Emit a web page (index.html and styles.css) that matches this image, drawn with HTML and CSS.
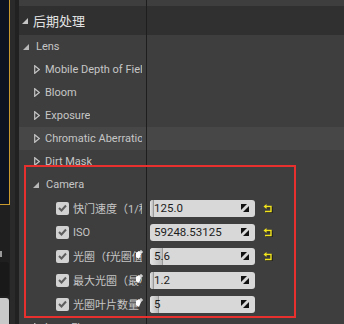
FILE: index.html
```html
<!DOCTYPE html>
<html lang="zh">
<head>
  <meta charset="UTF-8">
  <title>Details</title>
  <link rel="stylesheet" href="styles.css">
</head>
<body>
<div class="screen">

  <!-- left edge of the neighbouring viewport -->
  <div class="side">
    <div class="side-col">
      <div class="viewport"></div>
      <div class="side-gap"></div>
      <div class="side-chip"></div>
      <div class="side-dark"></div>
      <div class="side-light"></div>
    </div>
    <div class="side-strip"></div>
  </div>

  <!-- details panel -->
  <div class="details">
    <div class="row top"><div class="name"></div><div class="value"></div></div>

    <div class="row header">
      <div class="name">
        <svg class="tri" width="6" height="6" viewBox="0 0 6 6"><polygon points="6,0 6,6 0,6" fill="#c4c4c4"/></svg>
        <span class="label">后期处理</span>
      </div>
      <div class="value"></div>
    </div>

    <div class="row cat">
      <div class="name lvl0">
        <svg class="tri" width="6" height="6" viewBox="0 0 6 6"><polygon points="6,0 6,6 0,6" fill="#b8b8b8"/></svg>
        <span class="label">Lens</span>
      </div>
      <div class="value"></div>
    </div>

    <div class="row cat">
      <div class="name lvl1">
        <svg class="tri-open" width="6" height="9" viewBox="0 0 6 9"><polygon points="0.7,0.7 5.3,4.5 0.7,8.3" fill="none" stroke="#c4c4c4" stroke-width="1.2"/></svg>
        <span class="label">Mobile Depth of Field</span>
      </div>
      <div class="value"></div>
    </div>

    <div class="row cat">
      <div class="name lvl1">
        <svg class="tri-open" width="6" height="9" viewBox="0 0 6 9"><polygon points="0.7,0.7 5.3,4.5 0.7,8.3" fill="none" stroke="#c4c4c4" stroke-width="1.2"/></svg>
        <span class="label">Bloom</span>
      </div>
      <div class="value"></div>
    </div>

    <div class="row cat">
      <div class="name lvl1">
        <svg class="tri-open" width="6" height="9" viewBox="0 0 6 9"><polygon points="0.7,0.7 5.3,4.5 0.7,8.3" fill="none" stroke="#c4c4c4" stroke-width="1.2"/></svg>
        <span class="label">Exposure</span>
      </div>
      <div class="value"></div>
    </div>

    <div class="row cat hover">
      <div class="name lvl1">
        <svg class="tri-open" width="6" height="9" viewBox="0 0 6 9"><polygon points="0.7,0.7 5.3,4.5 0.7,8.3" fill="none" stroke="#c4c4c4" stroke-width="1.2"/></svg>
        <span class="label">Chromatic Aberration</span>
      </div>
      <div class="value"></div>
    </div>

    <div class="row cat">
      <div class="name lvl1">
        <svg class="tri-open" width="6" height="9" viewBox="0 0 6 9"><polygon points="0.7,0.7 5.3,4.5 0.7,8.3" fill="none" stroke="#c4c4c4" stroke-width="1.2"/></svg>
        <span class="label">Dirt Mask</span>
      </div>
      <div class="value"></div>
    </div>

    <div class="row cat">
      <div class="name lvl1">
        <svg class="tri" width="6" height="6" viewBox="0 0 6 6"><polygon points="6,0 6,6 0,6" fill="#b8b8b8"/></svg>
        <span class="label">Camera</span>
      </div>
      <div class="value"></div>
    </div>

    <!-- Camera properties -->
    <div class="row prop">
      <div class="name lvl2">
        <span class="check"><svg width="9" height="8" viewBox="0 0 9 8"><polyline points="1,4 3.5,6.5 8,1.5" fill="none" stroke="#5e5e5e" stroke-width="2"/></svg></span>
        <span class="label">快门速度（1/秒）</span>
      </div>
      <div class="value">
        <div class="spin"><span class="fill" style="width: 3px"></span><span class="num">125.0</span><svg class="spin-ico" width="8" height="8" viewBox="0 0 8 8"><polygon points="0,0 6,0 0,6" fill="#111"/><polygon points="8,2 8,8 2,8" fill="#111"/></svg></div>
        <svg class="reset" width="10" height="9" viewBox="0 0 10 9"><path d="M3 2.5 H8 V7.5 H2" fill="none" stroke="#1a1a1a" stroke-width="1.4" transform="translate(1,1)"/><path d="M3 2.5 H8 V7.5 H2" fill="none" stroke="#f2e41c" stroke-width="1.4"/><polygon points="0.5,2.5 3.5,0 3.5,5" fill="#f2e41c"/></svg>
      </div>
    </div>

    <div class="row prop">
      <div class="name lvl2">
        <span class="check"><svg width="9" height="8" viewBox="0 0 9 8"><polyline points="1,4 3.5,6.5 8,1.5" fill="none" stroke="#5e5e5e" stroke-width="2"/></svg></span>
        <span class="label">ISO</span>
      </div>
      <div class="value">
        <div class="spin"><span class="num">59248.53125</span><svg class="spin-ico" width="8" height="8" viewBox="0 0 8 8"><polygon points="0,0 6,0 0,6" fill="#111"/><polygon points="8,2 8,8 2,8" fill="#111"/></svg></div>
        <svg class="reset" width="10" height="9" viewBox="0 0 10 9"><path d="M3 2.5 H8 V7.5 H2" fill="none" stroke="#1a1a1a" stroke-width="1.4" transform="translate(1,1)"/><path d="M3 2.5 H8 V7.5 H2" fill="none" stroke="#f2e41c" stroke-width="1.4"/><polygon points="0.5,2.5 3.5,0 3.5,5" fill="#f2e41c"/></svg>
      </div>
    </div>

    <div class="row prop">
      <div class="name lvl2">
        <span class="check"><svg width="9" height="8" viewBox="0 0 9 8"><polyline points="1,4 3.5,6.5 8,1.5" fill="none" stroke="#5e5e5e" stroke-width="2"/></svg></span>
        <span class="label">光圈（f光圈值）</span>
        <svg class="cursor" width="8" height="10" viewBox="0 0 8 10"><path d="M1 3 L4 1 L6 4 L4 9 L1 7 Z" fill="#fff"/><path d="M6 0 V4 M4 2 H8" stroke="#fff" stroke-width="1"/></svg>
      </div>
      <div class="value">
        <div class="spin"><span class="fill" style="width: 12px"></span><span class="num">5.6</span><svg class="spin-ico" width="8" height="8" viewBox="0 0 8 8"><polygon points="0,0 6,0 0,6" fill="#111"/><polygon points="8,2 8,8 2,8" fill="#111"/></svg></div>
        <svg class="reset" width="10" height="9" viewBox="0 0 10 9"><path d="M3 2.5 H8 V7.5 H2" fill="none" stroke="#1a1a1a" stroke-width="1.4" transform="translate(1,1)"/><path d="M3 2.5 H8 V7.5 H2" fill="none" stroke="#f2e41c" stroke-width="1.4"/><polygon points="0.5,2.5 3.5,0 3.5,5" fill="#f2e41c"/></svg>
      </div>
    </div>

    <div class="row prop">
      <div class="name lvl2">
        <span class="check"><svg width="9" height="8" viewBox="0 0 9 8"><polyline points="1,4 3.5,6.5 8,1.5" fill="none" stroke="#5e5e5e" stroke-width="2"/></svg></span>
        <span class="label">最大光圈（最小f光圈值）</span>
        <svg class="cursor" width="8" height="10" viewBox="0 0 8 10"><path d="M1 3 L4 1 L6 4 L4 9 L1 7 Z" fill="#fff"/><path d="M6 0 V4 M4 2 H8" stroke="#fff" stroke-width="1"/></svg>
      </div>
      <div class="value">
        <div class="spin"><span class="fill" style="width: 3px"></span><span class="num">1.2</span><svg class="spin-ico" width="8" height="8" viewBox="0 0 8 8"><polygon points="0,0 6,0 0,6" fill="#111"/><polygon points="8,2 8,8 2,8" fill="#111"/></svg></div>
      </div>
    </div>

    <div class="row prop">
      <div class="name lvl2">
        <span class="check"><svg width="9" height="8" viewBox="0 0 9 8"><polyline points="1,4 3.5,6.5 8,1.5" fill="none" stroke="#5e5e5e" stroke-width="2"/></svg></span>
        <span class="label">光圈叶片数量</span>
        <svg class="cursor" width="8" height="10" viewBox="0 0 8 10"><path d="M1 3 L4 1 L6 4 L4 9 L1 7 Z" fill="#fff"/><path d="M6 0 V4 M4 2 H8" stroke="#fff" stroke-width="1"/></svg>
      </div>
      <div class="value">
        <div class="spin"><span class="fill" style="width: 8px"></span><span class="num">5</span><svg class="spin-ico" width="8" height="8" viewBox="0 0 8 8"><polygon points="0,0 6,0 0,6" fill="#111"/><polygon points="8,2 8,8 2,8" fill="#111"/></svg></div>
      </div>
    </div>

    <div class="row cat">
      <div class="name lvl1">
        <svg class="tri-open" width="6" height="9" viewBox="0 0 6 9"><polygon points="0.7,0.7 5.3,4.5 0.7,8.3" fill="none" stroke="#c4c4c4" stroke-width="1.2"/></svg>
        <span class="label">Lens Flares</span>
      </div>
      <div class="value"></div>
    </div>

    <!-- annotation frame -->
    <div class="mark"></div>
  </div>
</div>
</body>
</html>
```

FILE: styles.css
```css
/* General */
body {
  margin: 0;
  background: #3e3e3e;
  font-family: Roboto, "Noto Sans CJK SC", sans-serif;
}

.screen {
  display: flex;
  width: 344px;
  height: 324px;
  overflow: hidden;
}

/* Left edge */
.side {
  display: flex;
  width: 19px;
  flex-shrink: 0;
}

.side-col {
  width: 10px;
  display: flex;
  flex-direction: column;
  background: #1f1f1f;
}

.viewport {
  height: 205px;
  background: #0d1320;
  border-right: 1px solid #c99a2e;
  border-bottom: 1px solid #c99a2e;
  box-sizing: border-box;
  flex-shrink: 0;
}

.side-gap {
  height: 46px;
}

.side-chip {
  width: 2px;
  height: 6px;
  background: #9a9a9a;
}

.side-dark {
  height: 34px;
  margin-top: 5px;
  width: 9px;
  background: #191919;
  border-radius: 0 3px 3px 0;
}

.side-light {
  flex: 1;
  width: 9px;
  margin-top: 2px;
  background: #c9c9c9;
  border-radius: 0 3px 0 0;
}

.side-strip {
  width: 9px;
  background: linear-gradient(to right, #2a2a2a 0, #2a2a2a 5px, #212121 5px);
}

/* Details panel */
.details {
  flex: 1;
  position: relative;
  display: flex;
  flex-direction: column;
  color: #c6c6c6;
  font-size: 11px;
}

.row {
  display: flex;
  flex-shrink: 0;
}

.name {
  width: 127px;
  display: flex;
  align-items: center;
  white-space: nowrap;
  box-sizing: border-box;
  padding-right: 4px;
  position: relative;
  flex-shrink: 0;
}

.name svg {
  flex-shrink: 0;
}

.label {
  min-width: 0;
  overflow: hidden;
}

.value {
  flex: 1;
  display: flex;
  align-items: center;
  border-left: 1px solid #1e1e1e;
  padding-left: 3px;
}

.top {
  height: 6px;
}

.header {
  height: 29px;
  background: #303030;
}

.header .name {
  padding-left: 3px;
  font-size: 13px;
  color: #e2e2e2;
}

.header .tri {
  margin-right: 5px;
  margin-top: 1px;
}

.cat {
  height: 23px;
}

.hover {
  background: #474747;
}

.prop {
  height: 24px;
}

.lvl0 {
  padding-left: 4px;
}

.lvl0 .tri {
  margin-right: 7px;
}

.lvl1 {
  padding-left: 15px;
}

.lvl1 .tri-open {
  margin-right: 5px;
}

.lvl1 .tri {
  margin-left: -1px;
  margin-right: 7px;
}

.lvl2 {
  padding-left: 37px;
}

.check {
  width: 13px;
  height: 13px;
  border-radius: 2px;
  background: #d2d2d2;
  display: flex;
  align-items: center;
  justify-content: center;
  margin-right: 4px;
  flex-shrink: 0;
}

.cursor {
  position: absolute;
  right: 3px;
  top: 6px;
}

/* Spin boxes */
.spin {
  width: 105px;
  height: 17px;
  background: #d8d8d8;
  border-radius: 3px;
  display: flex;
  align-items: center;
  position: relative;
  overflow: hidden;
  color: #1c1c1c;
  font-size: 11.5px;
}

.fill {
  position: absolute;
  left: 0;
  top: 0;
  bottom: 0;
  background: linear-gradient(to right, #e4e4e4, #bdbdbd);
  border-right: 1px solid #9a9a9a;
}

.num {
  position: relative;
  padding-left: 4px;
  flex: 1;
}

.spin-ico {
  margin-right: 6px;
}

.reset {
  margin-left: 8px;
}

/* Red annotation frame */
.mark {
  position: absolute;
  left: 5px;
  top: 165px;
  width: 272px;
  height: 153px;
  border: 2px solid #e8312f;
  box-sizing: border-box;
}
```
